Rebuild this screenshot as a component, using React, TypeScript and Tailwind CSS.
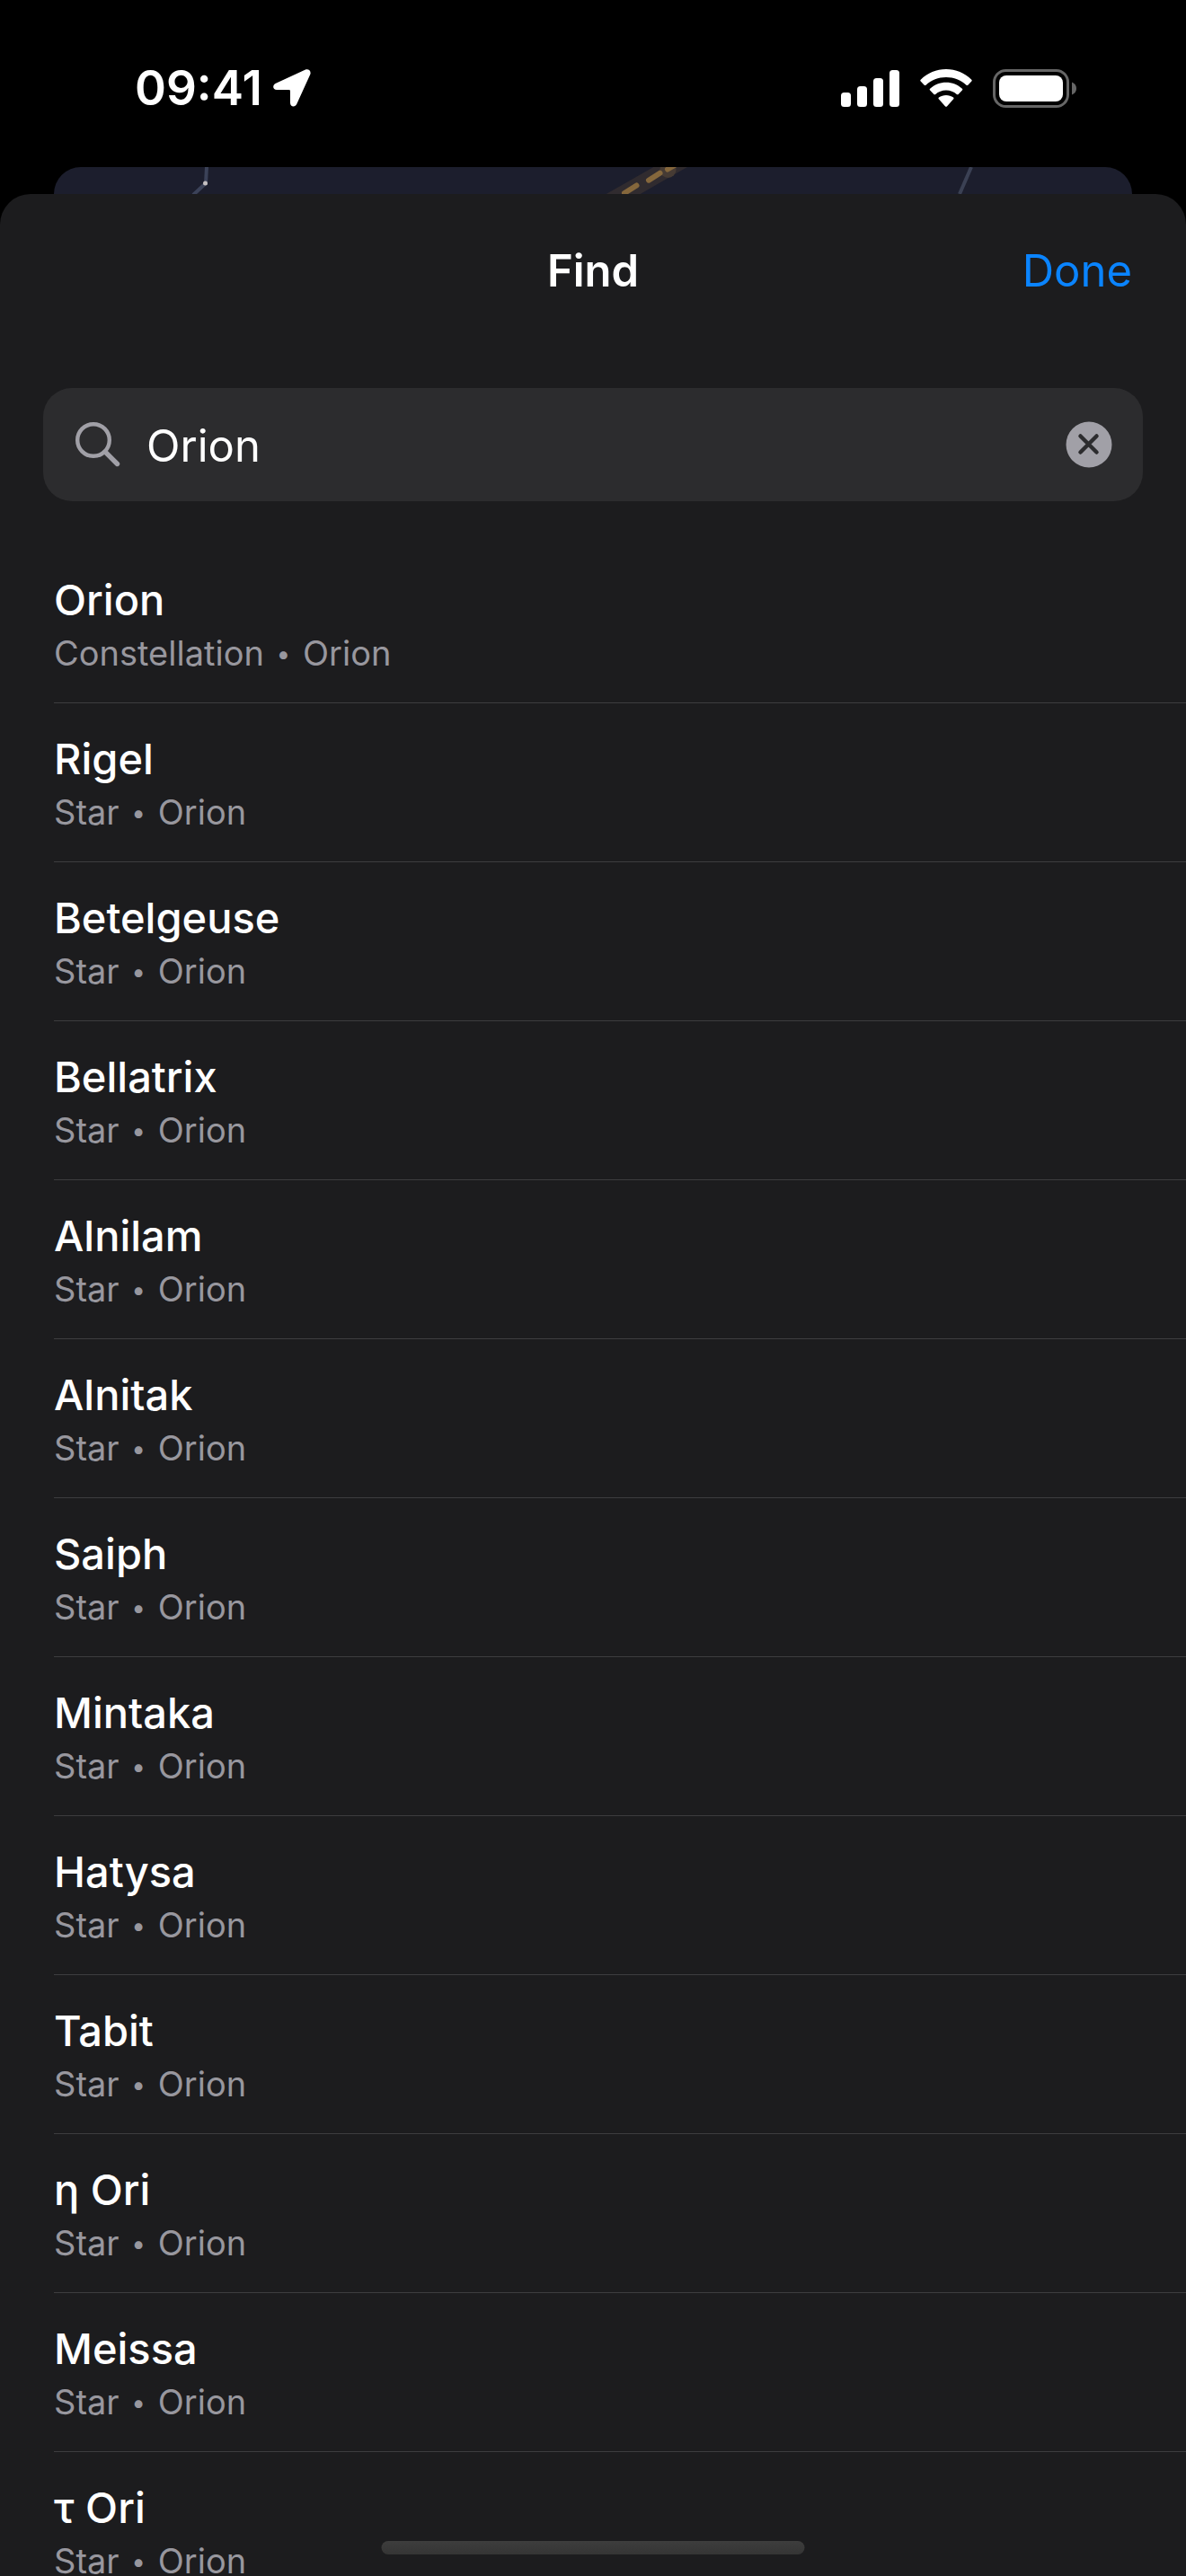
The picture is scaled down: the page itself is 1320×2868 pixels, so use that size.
import { useState } from "react";

type Result = {
  name: string;
  kind: string;
  constellation: string;
};

const RESULTS: Result[] = [
  { name: "Orion", kind: "Constellation", constellation: "Orion" },
  { name: "Rigel", kind: "Star", constellation: "Orion" },
  { name: "Betelgeuse", kind: "Star", constellation: "Orion" },
  { name: "Bellatrix", kind: "Star", constellation: "Orion" },
  { name: "Alnilam", kind: "Star", constellation: "Orion" },
  { name: "Alnitak", kind: "Star", constellation: "Orion" },
  { name: "Saiph", kind: "Star", constellation: "Orion" },
  { name: "Mintaka", kind: "Star", constellation: "Orion" },
  { name: "Hatysa", kind: "Star", constellation: "Orion" },
  { name: "Tabit", kind: "Star", constellation: "Orion" },
  { name: "η Ori", kind: "Star", constellation: "Orion" },
  { name: "Meissa", kind: "Star", constellation: "Orion" },
  { name: "τ Ori", kind: "Star", constellation: "Orion" },
];

function StatusBar() {
  return (
    <div className="flex h-[186px] shrink-0 items-start justify-between pt-[66px] pr-[121px] pl-[150px] text-white">
      <div className="flex items-center gap-3">
        <span className="text-[53px] leading-[64px] font-semibold">09:41</span>
        <svg viewBox="0 0 42 42" className="size-[42px]" fill="currentColor" aria-hidden="true">
          <path d="M35.5 0.8 3 15.8C-1.3 17.8-0.4 23 4 23h13.500c1 0 1.500.500 1.500 1.500V37.500c0 4.500 5.300 5.600 7.300 1.300L41.200 6C42.800 2.300 39.300-1 35.500.8Z" />
        </svg>
      </div>

      <div className="flex h-[64px] items-center gap-[23px]">
        <svg viewBox="0 0 65 41" className="h-[41px] w-[65px]" fill="currentColor" aria-hidden="true">
          <rect x="0" y="25" width="11" height="16" rx="3.500" />
          <rect x="18" y="18" width="11" height="23" rx="3.500" />
          <rect x="36" y="9" width="11" height="32" rx="3.500" />
          <rect x="54" y="0" width="11" height="41" rx="3.500" />
        </svg>
        <svg viewBox="0 0 58 42" className="h-[42px] w-[58px]" fill="currentColor" aria-hidden="true">
          <path d="M29 0C18.300 0 8.200 4.200.7 11.700c-.6.600-.6 1.200 0 1.800l4 4.200c.5.500 1.200.5 1.800 0C12.500 12 20.400 9 29 9s16.500 3 22.500 8.700c.6.500 1.300.5 1.800 0l4-4.200c.6-.6.600-1.200 0-1.800C49.800 4.200 39.700 0 29 0Z" />
          <path d="M29 14.700c-6.800 0-13 2.600-17.900 7.100-.6.600-.6 1.200 0 1.800l4.300 4.300c.5.500 1.200.5 1.800 0 3.200-2.800 7.300-4.400 11.800-4.400s8.600 1.600 11.800 4.400c.6.500 1.300.5 1.800 0l4.300-4.300c.6-.6.600-1.200 0-1.800-4.900-4.500-11.100-7.100-17.900-7.100Z" />
          <path d="M29 28.900c-3 0-5.800 1-8.100 2.700-.6.500-.6 1.100-.1 1.700l7.300 8.100c.5.600 1.300.6 1.800 0l7.300-8.100c.5-.6.5-1.200-.1-1.700-2.300-1.700-5.100-2.700-8.100-2.700Z" />
        </svg>
        <svg viewBox="0 0 94 43" className="h-[43px] w-[94px]" aria-hidden="true">
          <rect x="1.500" y="1.500" width="82" height="40" rx="13" fill="none" stroke="#666" strokeWidth="3" />
          <rect x="7" y="7" width="71" height="29" rx="8" fill="#fff" />
          <path d="M88 14.500c3.300 1.200 5 3.900 5 7s-1.700 5.800-5 7Z" fill="#666" />
        </svg>
      </div>
    </div>
  );
}

/* Strip of the sky map that shows above the sheet */
function SkyMapEdge() {
  return (
    <div className="mx-[60px] h-[30px] shrink-0 overflow-hidden rounded-t-[30px] bg-[#1c1e2d]">
      <svg viewBox="0 0 1200 30" preserveAspectRatio="xMidYMin slice" className="h-full w-full" fill="none" aria-hidden="true">
        <path d="M170 0 169 18 155 31" stroke="#3b4258" strokeWidth="4" />
        <circle cx="168.500" cy="18" r="2.500" fill="#c4bfc0" />
        <path d="M614.700 30 667.300 0h37.700l-52.400 30Z" fill="#302b2f" />
        <circle cx="683.500" cy="3" r="9" fill="#463b34" />
        <path d="m635 29 13.500-8.500M662 14.700l12.500-8M683 2.500l12-7" stroke="#85673c" strokeWidth="6" strokeLinecap="round" />
        <path d="m1021 0-13 30" stroke="#3b4154" strokeWidth="4" />
      </svg>
    </div>
  );
}

function SearchField({ value, onChange }: { value: string; onChange: (value: string) => void }) {
  return (
    <div className="mx-12 mt-[44px] flex h-[126px] shrink-0 items-center rounded-[32px] bg-[#2c2c2e] pr-[34px] pl-9">
      <svg viewBox="0 0 50 50" className="size-[50px] shrink-0" fill="none" stroke="#a1a0a7" aria-hidden="true">
        <circle cx="20" cy="20" r="17.800" strokeWidth="4.400" />
        <path d="m33 33 13.500 13.500" strokeWidth="5.400" strokeLinecap="round" />
      </svg>
      <input
        type="text"
        aria-label="Find"
        value={value}
        onChange={(e) => onChange(e.target.value)}
        className="ml-[29px] h-full min-w-0 flex-1 bg-transparent pt-0.5 text-[49px] leading-[64px] text-white outline-none"
      />
      <button type="button" aria-label="Clear search" onClick={() => onChange("")} className="shrink-0">
        <svg viewBox="0 0 52 52" className="size-[52px]" fill="none" aria-hidden="true">
          <circle cx="26" cy="26" r="25.500" fill="#a1a0a7" />
          <path d="m16.500 16.500 18 18m0-18-18 18" stroke="#2c2c2e" strokeWidth="4.500" strokeLinecap="round" />
        </svg>
      </button>
    </div>
  );
}

function ResultRow({ result }: { result: Result }) {
  return (
    <li className="ml-[60px] h-[177px] border-b border-[#3d3d3f]">
      <button type="button" className="flex h-full w-full flex-col gap-1.5 pt-[33px] text-left">
        <span className="text-[47px] leading-[58px] font-medium text-white">{result.name}</span>
        <span className="text-[38px] leading-[48px] text-[#98979e]">
          {result.kind} <span className="mx-[3px] align-[3px] text-[28px] leading-none">•</span> {result.constellation}
        </span>
      </button>
    </li>
  );
}

export default function App() {
  const [query, setQuery] = useState("Orion");

  return (
    <div className="relative flex h-screen flex-col overflow-hidden bg-black font-['Inter',sans-serif]">
      <StatusBar />
      <SkyMapEdge />

      <main className="flex min-h-0 flex-1 flex-col rounded-t-[34px] bg-[#1c1c1e]">
        <header className="grid h-[172px] shrink-0 grid-cols-3 items-center px-[60px]">
          <h1 className="col-start-2 text-center text-[49px] leading-[64px] font-semibold text-white">Find</h1>
          <button type="button" className="justify-self-end text-[49px] leading-[64px] text-[#0a84ff]">
            Done
          </button>
        </header>

        <SearchField value={query} onChange={setQuery} />

        <ul className="mt-[48px] min-h-0 flex-1 overflow-y-auto [scrollbar-width:none]">
          {RESULTS.map((result) => (
            <ResultRow key={result.name} result={result} />
          ))}
        </ul>
      </main>

      {/* Home indicator */}
      <div className="pointer-events-none absolute bottom-6 left-1/2 h-[15px] w-[471px] -translate-x-1/2 rounded-full bg-linear-to-b from-[#3d3d3d] to-[#353535]" />
    </div>
  );
}
